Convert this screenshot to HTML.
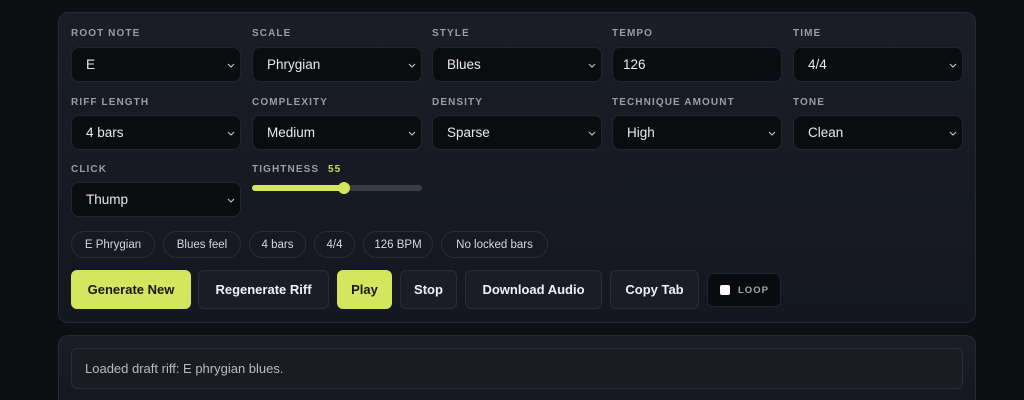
<!DOCTYPE html>
<html><head><style>
*{box-sizing:border-box;margin:0;padding:0}
html,body{width:1024px;height:400px;overflow:hidden}
body{background:#0e0f13;font-family:"Liberation Sans",sans-serif;color:#e8e9ec;position:relative}
.panel{position:absolute;left:58px;width:918px;background:linear-gradient(180deg,#1a1d26,#141720);border:1px solid #272a33;border-radius:10px}
.lbl{position:absolute;font-size:10px;font-weight:bold;letter-spacing:1.1px;color:#9a9ca6}
.sel{position:absolute;width:170px;height:35px;background:#0b0c10;border:1px solid #22252d;border-radius:8px;font-size:13.5px;padding-left:14px;line-height:33px;color:#e8e9ec}
.sel svg{position:absolute;right:5px;top:15px}
.chip{position:absolute;top:231px;height:27px;border:1px solid #2a2d36;border-radius:14px;font-size:11.5px;line-height:27px;text-align:center;color:#d6d8de;background:#161922}
.btn{position:absolute;top:270px;height:39px;border:1px solid #2a2d36;border-radius:6px;background:#1a1d26;font-size:13px;font-weight:bold;text-align:center;line-height:38px;color:#f0f1f3}
.y{background:#d4e65d;color:#15170c;border-color:#d4e65d}
</style></head><body>
<div class="panel" style="top:12px;height:311px"></div>
<div class="panel" style="top:335px;height:65px;border-bottom:none;border-radius:10px 10px 0 0"></div>

<div class="lbl" style="left:71px;top:28px">ROOT NOTE</div>
<div class="lbl" style="left:252px;top:28px">SCALE</div>
<div class="lbl" style="left:432px;top:28px">STYLE</div>
<div class="lbl" style="left:612px;top:28px">TEMPO</div>
<div class="lbl" style="left:793px;top:28px">TIME</div>
<div class="lbl" style="left:71px;top:97px">RIFF LENGTH</div>
<div class="lbl" style="left:252px;top:97px">COMPLEXITY</div>
<div class="lbl" style="left:432px;top:97px">DENSITY</div>
<div class="lbl" style="left:612px;top:97px">TECHNIQUE AMOUNT</div>
<div class="lbl" style="left:793px;top:97px">TONE</div>
<div class="lbl" style="left:71px;top:164px">CLICK</div>
<div class="lbl" style="left:252px;top:164px">TIGHTNESS <span style="color:#c8dc55;margin-left:5px">55</span></div>

<div class="sel" style="left:71px;top:47px">E<svg width="8" height="6"><path d="M1 1l3 3 3-3" stroke="#ccc" fill="none"/></svg></div>
<div class="sel" style="left:252px;top:47px">Phrygian<svg width="8" height="6"><path d="M1 1l3 3 3-3" stroke="#ccc" fill="none"/></svg></div>
<div class="sel" style="left:432px;top:47px">Blues<svg width="8" height="6"><path d="M1 1l3 3 3-3" stroke="#ccc" fill="none"/></svg></div>
<div class="sel" style="left:612px;top:47px;padding-left:10px">126</div>
<div class="sel" style="left:793px;top:47px">4/4<svg width="8" height="6"><path d="M1 1l3 3 3-3" stroke="#ccc" fill="none"/></svg></div>
<div class="sel" style="left:71px;top:115px">4 bars<svg width="8" height="6"><path d="M1 1l3 3 3-3" stroke="#ccc" fill="none"/></svg></div>
<div class="sel" style="left:252px;top:115px">Medium<svg width="8" height="6"><path d="M1 1l3 3 3-3" stroke="#ccc" fill="none"/></svg></div>
<div class="sel" style="left:432px;top:115px">Sparse<svg width="8" height="6"><path d="M1 1l3 3 3-3" stroke="#ccc" fill="none"/></svg></div>
<div class="sel" style="left:612px;top:115px">High<svg width="8" height="6"><path d="M1 1l3 3 3-3" stroke="#ccc" fill="none"/></svg></div>
<div class="sel" style="left:793px;top:115px">Clean<svg width="8" height="6"><path d="M1 1l3 3 3-3" stroke="#ccc" fill="none"/></svg></div>
<div class="sel" style="left:71px;top:182px">Thump<svg width="8" height="6"><path d="M1 1l3 3 3-3" stroke="#ccc" fill="none"/></svg></div>

<div style="position:absolute;left:252px;top:185px;width:170px;height:6px;border-radius:3px;background:#3a3c42"></div>
<div style="position:absolute;left:252px;top:185px;width:92px;height:6px;border-radius:3px;background:#d4e65d"></div>
<div style="position:absolute;left:338px;top:182px;width:12px;height:12px;border-radius:6px;background:#d4e65d"></div>

<div class="chip" style="left:71px;width:84px">E Phrygian</div>
<div class="chip" style="left:163px;width:78px">Blues feel</div>
<div class="chip" style="left:249px;width:57px">4 bars</div>
<div class="chip" style="left:314px;width:41px">4/4</div>
<div class="chip" style="left:363px;width:70px">126 BPM</div>
<div class="chip" style="left:441px;width:107px">No locked bars</div>

<div class="btn y" style="left:71px;width:120px">Generate New</div>
<div class="btn" style="left:198px;width:131px">Regenerate Riff</div>
<div class="btn y" style="left:337px;width:55px">Play</div>
<div class="btn" style="left:400px;width:57px">Stop</div>
<div class="btn" style="left:465px;width:137px">Download Audio</div>
<div class="btn" style="left:610px;width:89px">Copy Tab</div>
<div style="position:absolute;left:707px;top:273px;width:74px;height:34px;background:#0a0b0e;border:1px solid #20232b;border-radius:6px">
<div style="position:absolute;left:12px;top:11px;width:10px;height:10px;background:#fff;border-radius:2px"></div>
<div style="position:absolute;left:30px;top:11px;font-size:9.5px;font-weight:bold;letter-spacing:1px;color:#a4a6ae">LOOP</div></div>

<div style="position:absolute;left:71px;top:348px;width:892px;height:41px;background:#1a1c24;border:1px solid #2a2d36;border-radius:6px;font-size:13px;line-height:39px;padding-left:13px;color:#b9bbc2">Loaded draft riff: E phrygian blues.</div>
</body></html>
